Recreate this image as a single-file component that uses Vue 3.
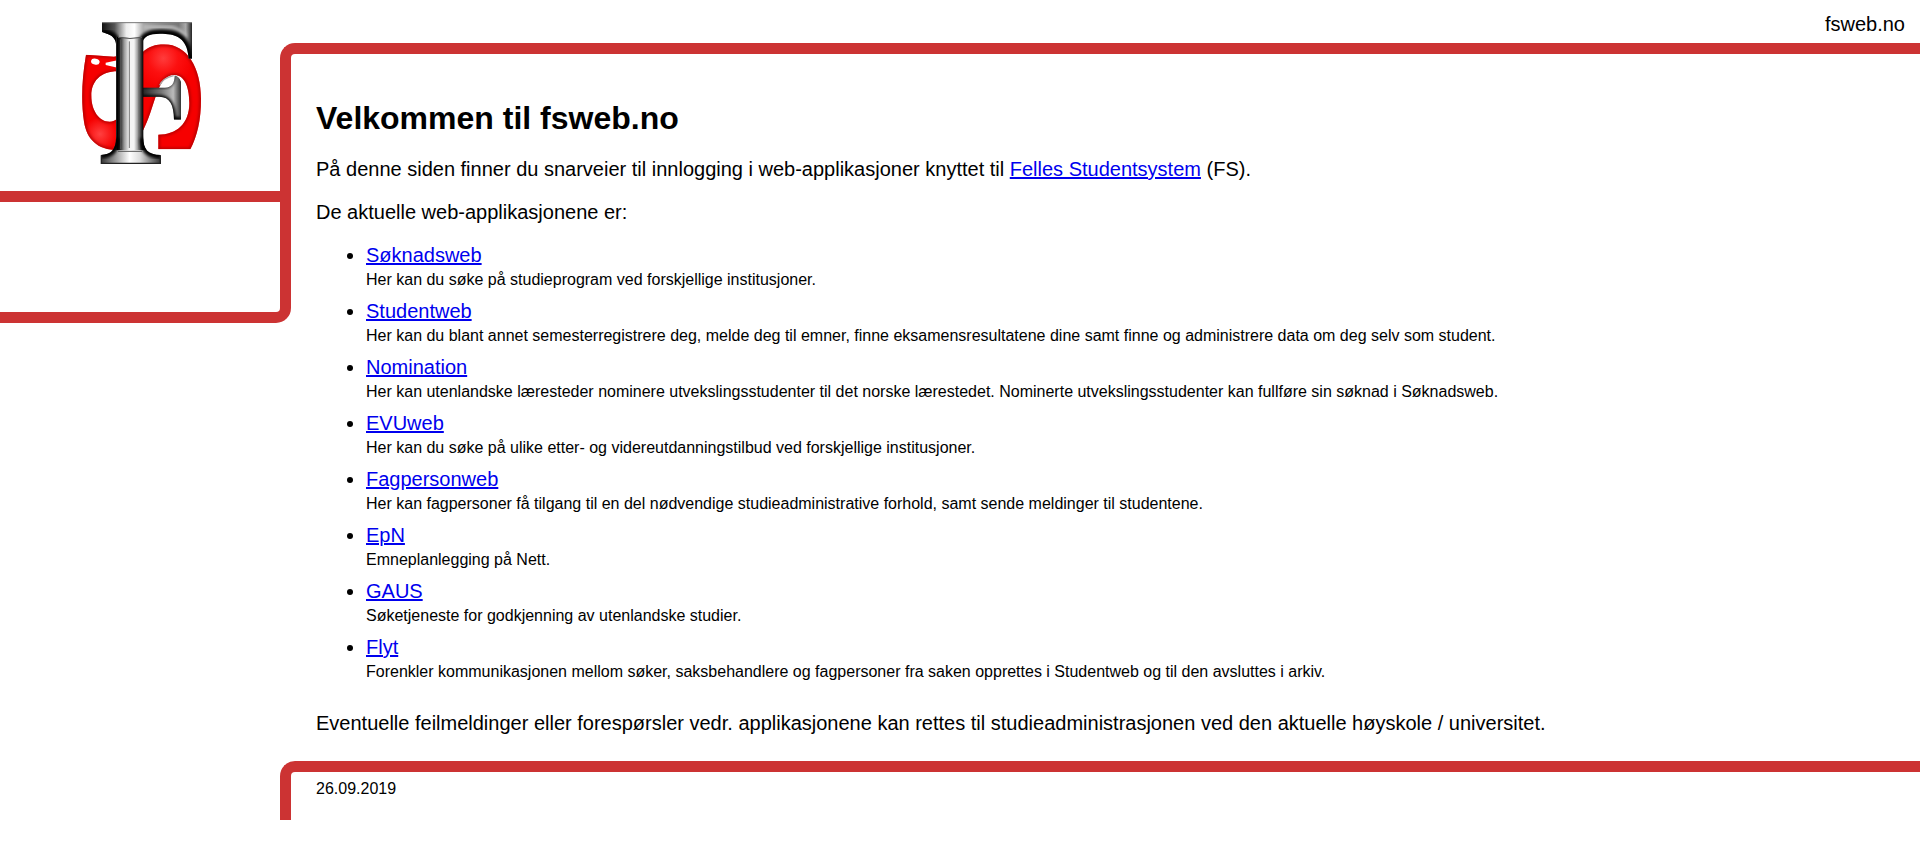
<script setup>
const applications = [
  { name: 'Søknadsweb', text: 'Her kan du søke på studieprogram ved forskjellige institusjoner.' },
  { name: 'Studentweb', text: 'Her kan du blant annet semesterregistrere deg, melde deg til emner, finne eksamensresultatene dine samt finne og administrere data om deg selv som student.' },
  { name: 'Nomination', text: 'Her kan utenlandske læresteder nominere utvekslingsstudenter til det norske lærestedet. Nominerte utvekslingsstudenter kan fullføre sin søknad i Søknadsweb.' },
  { name: 'EVUweb', text: 'Her kan du søke på ulike etter- og videreutdanningstilbud ved forskjellige institusjoner.' },
  { name: 'Fagpersonweb', text: 'Her kan fagpersoner få tilgang til en del nødvendige studieadministrative forhold, samt sende meldinger til studentene.' },
  { name: 'EpN', text: 'Emneplanlegging på Nett.' },
  { name: 'GAUS', text: 'Søketjeneste for godkjenning av utenlandske studier.' },
  { name: 'Flyt', text: 'Forenkler kommunikasjonen mellom søker, saksbehandlere og fagpersoner fra saken opprettes i Studentweb og til den avsluttes i arkiv.' },
]
</script>

<template>
  <div class="page">
    <div class="logo">
      <svg width="160" height="165" viewBox="0 0 480 495" aria-label="FS">
        <defs>
          <linearGradient id="shaft" x1="168" x2="250" y1="0" y2="0" gradientUnits="userSpaceOnUse">
            <stop offset="0" stop-color="#333" />
            <stop offset=".05" stop-color="#000" />
            <stop offset=".15" stop-color="#222" />
            <stop offset=".3" stop-color="#999" />
            <stop offset=".48" stop-color="#f4f4f4" />
            <stop offset=".66" stop-color="#f4f4f4" />
            <stop offset=".8" stop-color="#999" />
            <stop offset=".92" stop-color="#333" />
            <stop offset="1" stop-color="#000" />
          </linearGradient>
          <linearGradient id="metal" x1="126" x2="396" y1="0" y2="0" gradientUnits="userSpaceOnUse">
            <stop offset="0" stop-color="#111" />
            <stop offset=".14" stop-color="#555" />
            <stop offset=".27" stop-color="#eee" />
            <stop offset=".36" stop-color="#fff" />
            <stop offset=".46" stop-color="#aaa" />
            <stop offset=".68" stop-color="#8c8c8c" />
            <stop offset=".85" stop-color="#777" />
            <stop offset=".93" stop-color="#aaa" />
            <stop offset="1" stop-color="#222" />
          </linearGradient>
          <linearGradient id="serif" x1="123" x2="302" y1="0" y2="0" gradientUnits="userSpaceOnUse">
            <stop offset="0" stop-color="#333" />
            <stop offset=".2" stop-color="#888" />
            <stop offset=".48" stop-color="#fff" />
            <stop offset=".65" stop-color="#ddd" />
            <stop offset="1" stop-color="#333" />
          </linearGradient>
          <linearGradient id="mid" x1="246" x2="363" y1="0" y2="0" gradientUnits="userSpaceOnUse">
            <stop offset="0" stop-color="#222" />
            <stop offset=".5" stop-color="#777" />
            <stop offset=".8" stop-color="#bbb" />
            <stop offset="1" stop-color="#333" />
          </linearGradient>
          <radialGradient id="redRight" gradientUnits="userSpaceOnUse" cx="310" cy="145" r="90">
            <stop offset="0" stop-color="#ff3c3c" />
            <stop offset=".5" stop-color="#fc1010" />
            <stop offset="1" stop-color="#f60000" />
          </radialGradient>
          <radialGradient id="redLeft" gradientUnits="userSpaceOnUse" cx="120" cy="372" r="50">
            <stop offset="0" stop-color="#ff4040" />
            <stop offset="1" stop-color="#f60000" />
          </radialGradient>
          <filter id="soft" x="-20%" y="-20%" width="140%" height="140%"><feGaussianBlur stdDeviation="5" /></filter>
          <clipPath id="rightClip"><path d="M246 128C266 110 286 103 312 103C382 103 423 174 423 267C423 330 412 378 391 418H295V374C350 374 388 341 388 279C388 224 370 195 343 195C288 195 289 288 246 368Z" /></clipPath>
          <clipPath id="leftClip"><path d="M78 134L162 140L176 137V150L137 158V165L176 174V184C122 183 94 214 94 257C94 302 118 335 149 335Q162 335 176 324V420C112 421 80 387 72 335C63 276 65 209 78 134Z" /></clipPath>
          <clipPath id="topClip"><path d="M126 37H396V146H386C383 94 358 74 317 72C274 69 250 76 246 102H168C167 82 151 73 126 66Z" /></clipPath>
          <clipPath id="shaftClip"><path d="M168 80H250V385C250 418 264 435 302 435V461H123V435Q168 434 168 385Z" /></clipPath>
          <clipPath id="midClip"><path d="M246 233H315C335 233 344 220 344 196Q356 198 363 215V329H342C341 283 330 261 298 260H246Z" /></clipPath>
        </defs>

        <g clip-path="url(#rightClip)">
          <path fill="url(#redRight)" d="M230 90H430V430H230Z" />
          <path class="red-shade" filter="url(#soft)" d="M246 128C266 110 286 103 312 103C382 103 423 174 423 267C423 330 412 378 391 418H295V374C350 374 388 341 388 279C388 224 370 195 343 195C288 195 289 288 246 368" />
        </g>
        <g clip-path="url(#leftClip)">
          <path fill="url(#redLeft)" d="M50 120H190V440H50Z" />
          <path class="red-shade" filter="url(#soft)" d="M78 134L176 140M176 184C122 183 94 214 94 257C94 302 118 335 149 335Q162 335 176 324M176 420C112 421 80 387 72 335C63 276 65 209 78 134" />
        </g>
        <ellipse cx="106" cy="155" rx="13" ry="9" fill="#fff" transform="rotate(12 106 155)" />

        <path class="hook" d="M299 226Q309 204 341 197" />
        <g clip-path="url(#midClip)">
          <path fill="url(#mid)" d="M240 190H370V335H240Z" />
          <path class="mid-dark" filter="url(#soft)" d="M246 264H300Q338 266 341 329H363" />
          <path class="mid-dark thin" filter="url(#soft)" d="M246 231H315Q342 230 343 194" />
        </g>
        <g clip-path="url(#topClip)">
          <path fill="url(#metal)" d="M120 30H400V150H120Z" />
          <path class="arm-light" filter="url(#soft)" d="M250 52H335Q361 58 378 79" />
          <path class="arm-dark" filter="url(#soft)" d="M246 102C250 76 274 69 317 72C358 74 383 94 386 150H405" />
          <path class="arm-dark" filter="url(#soft)" d="M126 69Q165 74 168 102" />
          <path class="right-edge" filter="url(#soft)" d="M398 45V150" />
        </g>
        <g clip-path="url(#shaftClip)">
          <path fill="url(#shaft)" d="M160 80H260V420H160Z" />
          <path fill="url(#serif)" d="M120 420H305V465H120Z" />
          <path class="serif-dark" filter="url(#soft)" d="M123 433Q168 434 168 385M250 385C250 418 264 435 302 435" />
        </g>
        <path class="serif-edge" d="M124 436V460H301V436" />
        <path class="shaft-line" d="M208 94V414" />
        <path class="side-line" d="M182 88V418M237 88V418" />
        <path class="band-line" d="M174 82Q210 89 246 82M174 424H246" />
        <path class="top-line" d="M126 38H396" />
      </svg>
    </div>
    <header class="site-name">fsweb.no</header>
    <div class="frame-corner"></div>
    <div class="side-box"></div>
    <main class="content">
      <h1>Velkommen til fsweb.no</h1>
      <p>På denne siden finner du snarveier til innlogging i web-applikasjoner knyttet til <a href="#">Felles Studentsystem</a> (FS).</p>
      <p>De aktuelle web-applikasjonene er:</p>
      <ul>
        <li v-for="app in applications" :key="app.name">
          <a href="#">{{ app.name }}</a>
          <div class="description">{{ app.text }}</div>
        </li>
      </ul>
      <p>Eventuelle feilmeldinger eller forespørsler vedr. applikasjonene kan rettes til studieadministrasjonen ved den aktuelle høyskole / universitet.</p>
    </main>
    <footer class="footer">26.09.2019</footer>
  </div>
</template>

<style>
body { background: #fff; }
</style>

<style scoped>
.page {
  display: grid;
  grid-template-columns: 280px 11px 1fr;
  grid-template-rows: 43px 148px 132px 438px 59px;
  height: 857px;
  box-sizing: border-box;
  overflow: hidden;
  color: #000;
  font: 20px/23px "Liberation Sans", Arial, sans-serif;
}
.logo { grid-area: 1 / 1 / 3 / 2; padding: 10px 0 0 60px; }
.logo svg { display: block; }
.site-name { grid-area: 1 / 3; padding: 13px 15px 0 0; text-align: right; }
.frame-corner {
  grid-area: 2 / 2 / 3 / 4;
  border: solid #cc3333;
  border-width: 11px 0 0 11px;
  border-top-left-radius: 15px;
}
.side-box {
  grid-area: 3 / 1 / 4 / 3;
  border: solid #cc3333;
  border-width: 11px 11px 11px 0;
  border-bottom-right-radius: 15px;
}
.content { grid-area: 2 / 3 / 5 / 4; padding: 57px 25px 0; }
h1 { margin: 0 0 21px; font-size: 32px; line-height: 37px; }
p { margin: 0 0 20px; }
a { color: #0000ee; text-decoration: underline; }
ul { margin: 0 0 30px; padding-left: 50px; list-style: disc; }
li { margin-bottom: 10px; }
.description { padding-top: 1px; font-size: 16px; line-height: 22px; }
.description { padding-top: 2px; line-height: 21px; }
.footer {
  grid-area: 5 / 2 / 6 / 4;
  box-sizing: border-box;
  padding: 5px 25px 0;
  border: solid #cc3333;
  border-width: 11px 0 0 11px;
  border-top-left-radius: 15px;
  font-size: 16px;
}
.red-shade { fill: none; stroke: #a80000; stroke-width: 8; }
.hook { fill: none; stroke: #aaa; stroke-width: 4; }
.mid-dark { fill: none; stroke: #000; stroke-width: 16; }
.mid-dark.thin { stroke-width: 6; }
.arm-light { fill: none; stroke: #bbb; stroke-width: 10; }
.arm-dark { fill: none; stroke: #000; stroke-width: 26; }
.right-edge { fill: none; stroke: #222; stroke-width: 12; }
.serif-dark { fill: none; stroke: #000; stroke-width: 22; }
.serif-edge { fill: none; stroke: #222; stroke-width: 4; }
.shaft-line { fill: none; stroke: #777; stroke-width: 3; }
.side-line { fill: none; stroke: #666; stroke-width: 2; }
.band-line { fill: none; stroke: #555; stroke-width: 3; }
.top-line { fill: none; stroke: #777; stroke-width: 3; }
</style>
